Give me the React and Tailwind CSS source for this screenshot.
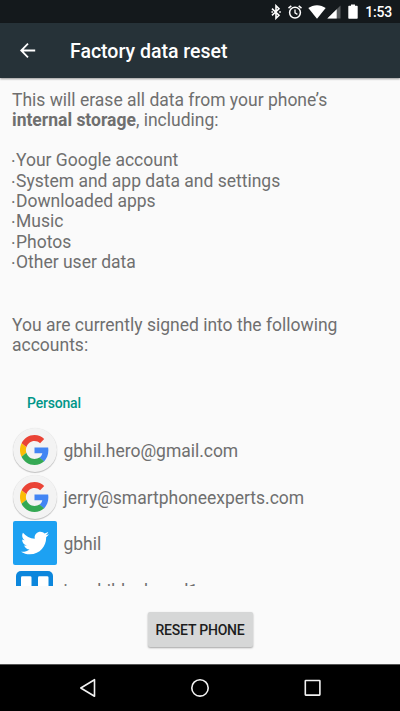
import { FaTwitter } from "react-icons/fa";

const ERASED = [
  "Your Google account",
  "System and app data and settings",
  "Downloaded apps",
  "Music",
  "Photos",
  "Other user data",
];

const ACCOUNTS = [
  { name: "gbhil.hero@gmail.com", type: "google" },
  { name: "jerry@smartphoneexperts.com", type: "google" },
  { name: "gbhil", type: "twitter" },
  { name: "jerryhildenbrand1", type: "trello" },
];

function GoogleLogo() {
  return (
    <div className="w-11 h-11 mb-[2px] rounded-full bg-[#f3f3f3] flex items-center justify-center pr-px shadow-[0_1px_1px_rgba(0,0,0,0.22),0_0_1px_rgba(0,0,0,0.12)]">
      <svg viewBox="0 0 48 48" className="w-[29px] h-[30px]" preserveAspectRatio="none">
        <path fill="#ea4335" d="M24 9.5c3.54 0 6.71 1.22 9.21 3.6l6.85-6.85C35.9 2.38 30.47 0 24 0 14.62 0 6.51 5.38 2.56 13.22l7.98 6.19C12.43 13.72 17.74 9.5 24 9.5z" />
        <path fill="#4285f4" d="M46.98 24.55c0-1.57-.15-3.09-.38-4.55H24v9.02h12.94c-.58 2.96-2.26 5.48-4.78 7.18l7.73 6c4.51-4.18 7.09-10.36 7.09-17.65z" />
        <path fill="#fbbc05" d="M10.53 28.59c-.48-1.45-.76-2.99-.76-4.59s.27-3.14.76-4.59l-7.98-6.19C.92 16.46 0 20.12 0 24s.92 7.54 2.56 10.78l7.97-6.19z" />
        <path fill="#34a853" d="M24 48c6.48 0 11.93-2.13 15.89-5.81l-7.73-6c-2.15 1.45-4.92 2.3-8.16 2.3-6.26 0-11.57-4.22-13.47-9.91l-7.98 6.19C6.51 42.62 14.62 48 24 48z" />
      </svg>
    </div>
  );
}

function TwitterLogo() {
  return (
    <div className="w-11 h-11 mb-[3px] rounded-[2px] bg-[#1da1f2] flex items-center justify-center">
      <FaTwitter size={28} color="#fff" />
    </div>
  );
}

function TrelloLogo() {
  return (
    <svg viewBox="0 0 37 37" className="w-[37px] h-[37px] mb-[3px] mr-px">
      <rect width="37" height="37" rx="5" fill="#0c86dc" />
      <rect x="5" y="5.3" width="10.5" height="26" rx="1.3" fill="#fff" />
      <rect x="22" y="5.3" width="10.5" height="17" rx="1.3" fill="#fff" />
    </svg>
  );
}

const LOGOS = { google: GoogleLogo, twitter: TwitterLogo, trello: TrelloLogo };

function StatusBar() {
  return (
    <div className="h-[23px] shrink-0 bg-[#14191c] flex items-center justify-end pr-2 text-white">
      <svg viewBox="0 0 10 16" className="w-[10px] h-4 mr-[7px]" fill="none" stroke="#fff" strokeWidth="1.6">
        <path d="M1 4.6 8 11.2 5 14.2V1.8L8 4.8 1 11.4" />
        <path d="M.4 8h1.6M8.2 8h1.6" />
      </svg>
      <svg viewBox="0 0 14 14" className="w-[14px] h-[14px] mr-[6px]" fill="none" stroke="#fff" strokeWidth="1.5">
        <circle cx="7" cy="7.6" r="5.4" />
        <path d="M7 4.5v3.4l2.4 1.5" strokeWidth="1.3" />
        <path d="M.5 3.1 3.3.8M13.5 3.1 10.7.8" />
      </svg>
      <svg viewBox="0 0 18 14" className="w-[18px] h-[14px] mr-px">
        <path d="M9 13.8.3 3.1C2.8 1.2 5.8.2 9 .2s6.2 1 8.7 2.9z" fill="#fff" />
      </svg>
      <svg viewBox="0 0 14 14" className="w-[14px] h-[14px] mr-[7px]">
        <path d="M13.5.5v13H.3z" fill="#585c5e" />
        <path d="M9.7 4.3v9.2H.3z" fill="#fff" />
      </svg>
      <svg viewBox="0 0 10 15" className="w-[10px] h-[15px] mr-[7px]">
        <path d="M3 .5h4v1.3h2q.7 0 .7.7v11.5q0 .7-.7.7H1q-.7 0-.7-.7V2.5q0-.7.7-.7h2z" fill="#fff" />
      </svg>
      <span className="text-[14px] leading-none font-medium tracking-[-0.2px] mt-px">1:53</span>
    </div>
  );
}

function NavBar() {
  return (
    <div className="h-[47px] shrink-0 bg-black border-t border-[#555]">
      <svg viewBox="0 0 400 46" className="w-[400px] h-[46px]" fill="none" stroke="#f2f2f2" strokeWidth="1.6" strokeLinejoin="round">
        <path d="M94.5 14.7v16.6L80.8 23z" />
        <circle cx="200" cy="22.9" r="8.2" />
        <rect x="305.3" y="15.5" width="14.6" height="14.6" rx="0.5" />
      </svg>
    </div>
  );
}

export default function App() {
  return (
    <div className="w-[400px] h-[711px] flex flex-col overflow-hidden bg-[#fafafa] font-['Roboto',sans-serif] text-[17.5px] leading-[20.35px] text-[#6f6f6f]">
      <StatusBar />

      <header className="h-[55px] shrink-0 bg-[#263238] flex items-center pl-5 shadow-[0_1px_2px_rgba(0,0,0,0.4)]">
        <svg viewBox="0 0 16 16" className="w-4 h-4 mr-[34px]" fill="none" stroke="#fff" strokeWidth="1.8">
          <path d="M15.2 7.5H1.6M8 .7 1.2 7.5l6.8 6.8" />
        </svg>
        <h1 className="pt-[3px] text-[19.5px] font-medium text-white">Factory data reset</h1>
      </header>

      <main className="h-[508px] shrink-0 overflow-hidden pt-[11.5px] pl-3">
        <p>
          This will erase all data from your phone’s
          <br />
          <b className="font-bold">internal storage</b>, including:
        </p>

        <ul className="mt-5">
          {ERASED.map((item) => (
            <li key={item} className="flex">
              <span className="w-1 -ml-px mr-px mt-[2px] -mb-[2px]">·</span>
              {item}
            </li>
          ))}
        </ul>

        <p className="mt-[42.5px]">
          You are currently signed into the following
          <br />
          accounts:
        </p>

        <h2 className="mt-[37.5px] ml-[15px] text-[14px] tracking-[-0.2px] font-medium text-[#009688]">Personal</h2>

        <div className="mt-[14.5px]">
          {ACCOUNTS.map(({ name, type }) => {
            const Logo = LOGOS[type];
            return (
              <div key={name} className="h-[46.7px] flex items-center">
                <div className="w-[46px] flex justify-center">
                  <Logo />
                </div>
                <span className="ml-[5.5px] tracking-[-0.02px]">{name}</span>
              </div>
            );
          })}
        </div>
      </main>

      <div className="grow flex justify-center items-start pt-[26px]">
        <button className="w-[105px] h-[35px] pt-px rounded-[2px] bg-[#d6d7d7] text-[14px] tracking-[-0.2px] font-medium text-[#1d1d1d] whitespace-nowrap shadow-[0_1px_2px_rgba(0,0,0,0.35)]">
          RESET PHONE
        </button>
      </div>

      <NavBar />
    </div>
  );
}
